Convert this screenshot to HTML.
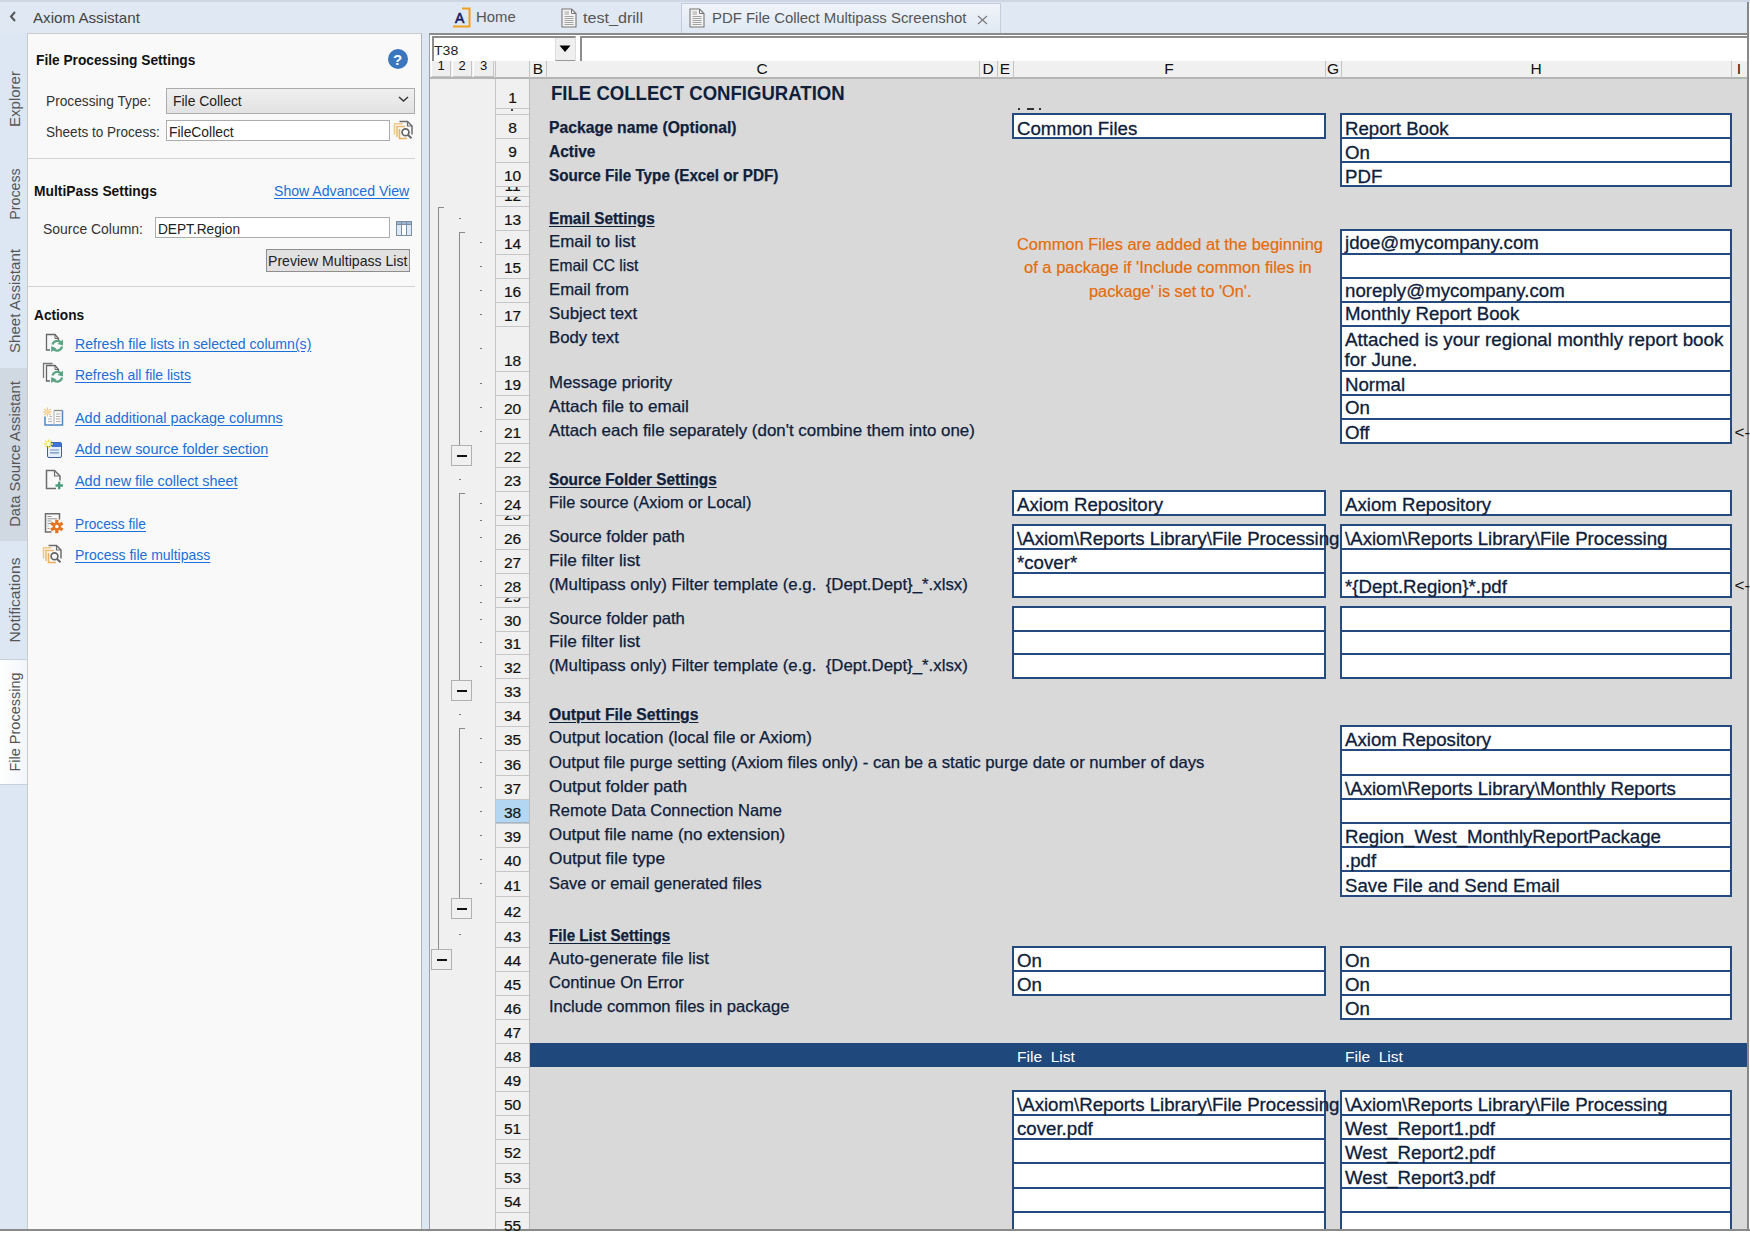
<!DOCTYPE html>
<html><head><meta charset="utf-8">
<style>
*{margin:0;padding:0;box-sizing:border-box}
html,body{width:1750px;height:1233px;overflow:hidden;background:#dfe8f3;font-family:"Liberation Sans",sans-serif;position:relative}
.a{position:absolute}
.t{position:absolute;white-space:nowrap;transform-origin:0 0;line-height:1}
.v{position:absolute;white-space:nowrap;line-height:1}
</style></head><body>
<div class="a" style="left:0px;top:33px;width:27px;height:1197px;background:#dde7f3"></div>
<div class="a" style="left:0px;top:368px;width:27px;height:173px;background:#d0d8e1"></div>
<div class="a" style="left:0px;top:659px;width:27px;height:126px;background:linear-gradient(90deg,#ffffff,#f2f5fa);border-top:1px solid #c9d1db;border-bottom:1px solid #c9d1db"></div>
<svg class="a" style="left:8px;top:10px" width="10" height="14"><path d="M7 2 L3 6.5 L7 11" fill="none" stroke="#555" stroke-width="2"/></svg>
<div class="a" style="left:27px;top:33px;width:395px;height:1197px;background:#f9f9f9;border-left:1px solid #cbcbcb;border-top:1px solid #cbcbcb;border-right:1px solid #b4b4b4"></div>
<div class="a" style="left:388px;top:49px;width:20px;height:20px;border-radius:50%;background:#3a76bd"></div>
<div class="a" style="left:166px;top:88px;width:249px;height:26px;background:linear-gradient(#f0f0f0,#e2e2e2);border:1px solid #acacac"></div>
<svg class="a" style="left:398px;top:96px" width="11" height="7"><path d="M1 1 L5.5 5 L10 1" fill="none" stroke="#333" stroke-width="1.4"/></svg>
<div class="a" style="left:166px;top:120px;width:224px;height:21px;background:#fff;border:1px solid #acacac"></div>
<div class="a" style="left:28px;top:158px;width:387px;height:1px;background:#d2d2d2"></div>
<div class="a" style="left:155px;top:217px;width:235px;height:21px;background:#fff;border:1px solid #acacac"></div>
<svg class="a" style="left:396px;top:221px" width="16" height="15">
<rect x="0.5" y="0.5" width="15" height="14" fill="#dfe9f5" stroke="#7a8ea6"/>
<rect x="0.5" y="0.5" width="15" height="3" fill="#9fb4cc" stroke="#7a8ea6"/>
<path d="M5.5 1 V14 M10.5 1 V14" stroke="#7a8ea6"/>
<rect x="6" y="4" width="4" height="10" fill="#fff"/>
</svg>
<div class="a" style="left:266px;top:249px;width:144px;height:23px;background:#e1e1e1;border:1px solid #8e8e8e"></div>
<div class="a" style="left:28px;top:286px;width:387px;height:1px;background:#d2d2d2"></div>
<svg class="a" style="left:42px;top:331px" width="24" height="24"><path d="M8 19 H4.5 V3.5 H13 L16.5 7.5 V10" fill="none" stroke="#666" stroke-width="1.3"/><path d="M13 3.5 V7.5 H16.5" fill="none" stroke="#666" stroke-width="1"/><path d="M10.5 13.5 A5 5 0 0 1 19 11.5" fill="none" stroke="#5aa383" stroke-width="2.3"/><path d="M21 8.5 L21 14.5 L15.5 13 Z" fill="#5aa383"/><path d="M20 15.5 A5 5 0 0 1 11.5 18" fill="none" stroke="#5aa383" stroke-width="2.3"/><path d="M9 21 L9.3 15 L14.5 17.5 Z" fill="#5aa383"/></svg>
<svg class="a" style="left:42px;top:362px" width="24" height="24"><path d="M1.5 16 V1.5 H10.5" fill="none" stroke="#777" stroke-width="1.3"/><path d="M8 19 H4.5 V3.5 H13 L16.5 7.5 V10" fill="none" stroke="#666" stroke-width="1.3"/><path d="M13 3.5 V7.5 H16.5" fill="none" stroke="#666" stroke-width="1"/><path d="M10.5 13.5 A5 5 0 0 1 19 11.5" fill="none" stroke="#5aa383" stroke-width="2.3"/><path d="M21 8.5 L21 14.5 L15.5 13 Z" fill="#5aa383"/><path d="M20 15.5 A5 5 0 0 1 11.5 18" fill="none" stroke="#5aa383" stroke-width="2.3"/><path d="M9 21 L9.3 15 L14.5 17.5 Z" fill="#5aa383"/></svg>
<svg class="a" style="left:40px;top:405px" width="30" height="25" viewBox="40 405 30 25">
<g stroke="#f0c27a" stroke-width="1.1"><path d="M47.5 407.5 V416.5 M43 412 H52 M44.3 408.8 L50.7 415.2 M50.7 408.8 L44.3 415.2"/></g>
<circle cx="47.5" cy="412" r="2.2" fill="#f6d9a4"/>
<path d="M45 416.5 V425 H62.5 V410.5" fill="none" stroke="#4f86c6" stroke-width="1.5"/>
<path d="M54 410.5 H62.5" stroke="#888" stroke-width="1.3"/>
<path d="M54 410.5 V425" stroke="#bbb" stroke-width="1.2"/>
<path d="M56 414 H60.5 M56 416.5 H60.5 M56 419 H60.5 M56 421.5 H60.5 M48 419 H52 M48 421.5 H52 M49.5 416.5 H52" stroke="#aaa" stroke-width="0.9"/>
</svg>
<svg class="a" style="left:40px;top:436px" width="30" height="26" viewBox="40 436 30 26">
<rect x="47.5" y="442.5" width="14" height="15" rx="1.5" fill="#e6eefb" stroke="#3d5f96" stroke-width="1"/>
<rect x="47.5" y="442.5" width="14" height="4.5" rx="1" fill="#3f73d8"/>
<path d="M50 450 H59 M50 452.8 H59" stroke="#6f8fc2" stroke-width="1.2"/>
<g stroke="#f5e05a" stroke-width="1.3"><path d="M48.5 439.5 V448.5 M44 444 H53 M45.3 440.8 L51.7 447.2 M51.7 440.8 L45.3 447.2"/></g>
<circle cx="48.5" cy="444" r="2" fill="#fffbe0"/>
</svg>
<svg class="a" style="left:40px;top:468px" width="30" height="25" viewBox="40 468 30 25">
<path d="M56 488.5 H46.5 V470.5 H54.5 L60 476 V480.5" fill="none" stroke="#6d6d6d" stroke-width="1.5"/>
<path d="M54.5 470.5 V476 H60" fill="none" stroke="#6d6d6d" stroke-width="1.2"/>
<path d="M59.2 481.8 V489.2 M55.5 485.5 H62.9" stroke="#4f9a7c" stroke-width="2.4"/>
</svg>
<svg class="a" style="left:40px;top:511px" width="30" height="25" viewBox="40 511 30 25">
<path d="M51.5 532 H45.5 V513.8 H59.5 V519.5" fill="none" stroke="#6d6d6d" stroke-width="1.5"/>
<path d="M47.5 516.5 H51.5 M47.5 518.8 H57 M47.5 521 H51.5 M47.5 523.5 H51 M47.5 526 H48.5 M47.5 528.5 H49.5" stroke="#8a8a8a" stroke-width="0.9"/>
<g fill="#e8731f"><circle cx="56.8" cy="526.5" r="4"/>
<path d="M55.2 519.8 H58.4 V533.2 H55.2 Z" transform="rotate(0 56.8 526.5)"/>
<path d="M55.2 519.8 H58.4 V533.2 H55.2 Z" transform="rotate(60 56.8 526.5)"/>
<path d="M55.2 519.8 H58.4 V533.2 H55.2 Z" transform="rotate(120 56.8 526.5)"/></g>
<circle cx="56.8" cy="526.5" r="1.8" fill="#fff"/>
</svg>
<svg class="a" style="left:40px;top:542px" width="30" height="24" viewBox="40 542 30 24"><g transform="translate(0 0)">
<path d="M43.5 558.5 V547.8 H51.5" fill="none" stroke="#f0c888" stroke-width="1.5"/>
<path d="M46 561 V550.5 H54" fill="none" stroke="#ecb870" stroke-width="1.5"/>
<path d="M48.5 545.5 H56.5 L61 550 V558.5" fill="none" stroke="#6d6d6d" stroke-width="1.5"/>
<path d="M56.5 545.5 V550 H61" fill="none" stroke="#6d6d6d" stroke-width="1.2"/>
<path d="M48.5 553 V562.5 H56" fill="none" stroke="#e9b060" stroke-width="1.6"/>
<circle cx="54.5" cy="556.3" r="3.4" fill="#fff" stroke="#666" stroke-width="1.7"/>
<path d="M57 559 L60.5 562.3" stroke="#666" stroke-width="2"/></g></svg>
<svg class="a" style="left:391px;top:118px" width="30" height="24" viewBox="391 118 30 24"><g transform="translate(351 -424)">
<path d="M43.5 558.5 V547.8 H51.5" fill="none" stroke="#f0c888" stroke-width="1.5"/>
<path d="M46 561 V550.5 H54" fill="none" stroke="#ecb870" stroke-width="1.5"/>
<path d="M48.5 545.5 H56.5 L61 550 V558.5" fill="none" stroke="#6d6d6d" stroke-width="1.5"/>
<path d="M56.5 545.5 V550 H61" fill="none" stroke="#6d6d6d" stroke-width="1.2"/>
<path d="M48.5 553 V562.5 H56" fill="none" stroke="#e9b060" stroke-width="1.6"/>
<circle cx="54.5" cy="556.3" r="3.4" fill="#fff" stroke="#666" stroke-width="1.7"/>
<path d="M57 559 L60.5 562.3" stroke="#666" stroke-width="2"/></g></svg>
<div class="a" style="left:422px;top:33px;width:7px;height:1197px;background:#dde7f3"></div>
<svg class="a" style="left:452px;top:7px" width="20" height="21">
<path d="M10 1.5 H17.5 V19.5 H1" fill="none" stroke="#f0a01e" stroke-width="2"/>
<text x="3" y="16" font-family="Liberation Sans" font-size="14" fill="#1a1a66" stroke="#1a1a66" stroke-width="0.6">A</text>
</svg>
<svg class="a" style="left:561px;top:8px" width="16" height="20">
<path d="M1 1 H10.5 L15 5.5 V19 H1 Z" fill="#f4f4f4" stroke="#777" stroke-width="1.1"/>
<path d="M10.5 1 V5.5 H15" fill="none" stroke="#777" stroke-width="1"/>
<path d="M3.5 4 H8 M3.5 6 H8 M3.5 8.5 H12.5 M3.5 10.5 H12.5 M3.5 12.5 H12.5 M3.5 14.5 H12.5 M3.5 16.5 H12.5" stroke="#999" stroke-width="0.9"/>
</svg>
<div class="a" style="left:681px;top:3px;width:320px;height:30px;background:linear-gradient(#f0f4fa,#dfe8f3);border:1px solid #c3ccd8;border-bottom:none"></div>
<svg class="a" style="left:689px;top:8px" width="16" height="20">
<path d="M1 1 H10.5 L15 5.5 V19 H1 Z" fill="#f4f4f4" stroke="#777" stroke-width="1.1"/>
<path d="M10.5 1 V5.5 H15" fill="none" stroke="#777" stroke-width="1"/>
<path d="M3.5 4 H8 M3.5 6 H8 M3.5 8.5 H12.5 M3.5 10.5 H12.5 M3.5 12.5 H12.5 M3.5 14.5 H12.5 M3.5 16.5 H12.5" stroke="#999" stroke-width="0.9"/>
</svg>
<svg class="a" style="left:977px;top:15px" width="11" height="10"><path d="M1 1 L10 9 M10 1 L1 9" stroke="#777" stroke-width="1.1"/></svg>
<div class="a" style="left:429px;top:33px;width:1320px;height:1197px;background:#f0f0f0;border-top:2px solid #8b8b8b;border-left:1px solid #a0a0a0"></div>
<div class="a" style="left:1747px;top:0px;width:3px;height:1230px;background:#888;border-right:1px solid #fff"></div>
<div class="a" style="left:430px;top:35px;width:1317px;height:26px;background:#fff"></div>
<div class="a" style="left:432px;top:36px;width:144px;height:25px;background:#fff;border-top:2px solid #8c8c8c;border-left:2px solid #8c8c8c;border-right:1px solid #dcdcdc"></div>
<div class="a" style="left:555px;top:38px;width:20px;height:23px;background:#efefef;border-left:1px solid #ddd;border-bottom:1px solid #999"></div>
<svg class="a" style="left:559px;top:45px" width="12" height="8"><path d="M0.5 0.5 H11.5 L6 7 Z" fill="#000"/></svg>
<div class="a" style="left:580px;top:36px;width:1167px;height:25px;background:#fff;border-top:2px solid #8c8c8c;border-left:2px solid #8c8c8c"></div>
<div class="a" style="left:430px;top:61px;width:1317px;height:18px;background:#f0f0f0;border-bottom:2px solid #b5b5b5"></div>
<div class="a" style="left:431px;top:61px;width:20px;height:16px;background:#efefef;border-right:1px solid #c4c4c4;border-bottom:1px solid #c4c4c4;border-left:1px solid #fff"></div>
<div class="a" style="left:452px;top:61px;width:20px;height:16px;background:#efefef;border-right:1px solid #c4c4c4;border-bottom:1px solid #c4c4c4;border-left:1px solid #fff"></div>
<div class="a" style="left:473px;top:61px;width:21px;height:16px;background:#efefef;border-right:1px solid #c4c4c4;border-bottom:1px solid #c4c4c4;border-left:1px solid #fff"></div>
<div class="a" style="left:495px;top:61px;width:1px;height:17px;background:#c4c4c4"></div>
<div class="a" style="left:529px;top:61px;width:1px;height:17px;background:#c4c4c4"></div>
<div class="a" style="left:546px;top:61px;width:1px;height:17px;background:#c4c4c4"></div>
<div class="a" style="left:979px;top:61px;width:1px;height:17px;background:#c4c4c4"></div>
<div class="a" style="left:997px;top:61px;width:1px;height:17px;background:#c4c4c4"></div>
<div class="a" style="left:1013px;top:61px;width:1px;height:17px;background:#c4c4c4"></div>
<div class="a" style="left:1325px;top:61px;width:1px;height:17px;background:#c4c4c4"></div>
<div class="a" style="left:1341px;top:61px;width:1px;height:17px;background:#c4c4c4"></div>
<div class="a" style="left:1731px;top:61px;width:1px;height:17px;background:#c4c4c4"></div>
<div class="a" style="left:430px;top:79px;width:65px;height:1151px;background:#f0f0f0"></div>
<div class="a" style="left:495px;top:79px;width:35px;height:1151px;background:#f0f0f0;border-left:1px solid #c4c4c4;border-right:1px solid #bdbdbd"></div>
<div class="a" style="left:530px;top:79px;width:1217px;height:1151px;background:#d9d9d9"></div>
<div class="a" style="left:496px;top:799px;width:33px;height:24px;background:#b3d7f2;border-top:1px solid #9fb7cc;border-bottom:1px solid #9fb7cc"></div>
<div class="a" style="left:496px;top:108px;width:33px;height:1px;background:#c6c6c6"></div>
<div class="a" style="left:496px;top:114px;width:33px;height:1px;background:#c6c6c6"></div>
<div class="a" style="left:496px;top:138px;width:33px;height:1px;background:#c6c6c6"></div>
<div class="a" style="left:496px;top:162px;width:33px;height:1px;background:#c6c6c6"></div>
<div class="a" style="left:496px;top:186px;width:33px;height:1px;background:#c6c6c6"></div>
<div class="a" style="left:496px;top:196px;width:33px;height:1px;background:#c6c6c6"></div>
<div class="a" style="left:496px;top:206px;width:33px;height:1px;background:#c6c6c6"></div>
<div class="a" style="left:496px;top:230px;width:33px;height:1px;background:#c6c6c6"></div>
<div class="a" style="left:496px;top:254px;width:33px;height:1px;background:#c6c6c6"></div>
<div class="a" style="left:496px;top:278px;width:33px;height:1px;background:#c6c6c6"></div>
<div class="a" style="left:496px;top:302px;width:33px;height:1px;background:#c6c6c6"></div>
<div class="a" style="left:496px;top:326px;width:33px;height:1px;background:#c6c6c6"></div>
<div class="a" style="left:496px;top:371px;width:33px;height:1px;background:#c6c6c6"></div>
<div class="a" style="left:496px;top:395px;width:33px;height:1px;background:#c6c6c6"></div>
<div class="a" style="left:496px;top:419px;width:33px;height:1px;background:#c6c6c6"></div>
<div class="a" style="left:496px;top:443px;width:33px;height:1px;background:#c6c6c6"></div>
<div class="a" style="left:496px;top:467px;width:33px;height:1px;background:#c6c6c6"></div>
<div class="a" style="left:496px;top:491px;width:33px;height:1px;background:#c6c6c6"></div>
<div class="a" style="left:496px;top:515px;width:33px;height:1px;background:#c6c6c6"></div>
<div class="a" style="left:496px;top:525px;width:33px;height:1px;background:#c6c6c6"></div>
<div class="a" style="left:496px;top:549px;width:33px;height:1px;background:#c6c6c6"></div>
<div class="a" style="left:496px;top:573px;width:33px;height:1px;background:#c6c6c6"></div>
<div class="a" style="left:496px;top:597px;width:33px;height:1px;background:#c6c6c6"></div>
<div class="a" style="left:496px;top:607px;width:33px;height:1px;background:#c6c6c6"></div>
<div class="a" style="left:496px;top:631px;width:33px;height:1px;background:#c6c6c6"></div>
<div class="a" style="left:496px;top:654px;width:33px;height:1px;background:#c6c6c6"></div>
<div class="a" style="left:496px;top:678px;width:33px;height:1px;background:#c6c6c6"></div>
<div class="a" style="left:496px;top:702px;width:33px;height:1px;background:#c6c6c6"></div>
<div class="a" style="left:496px;top:726px;width:33px;height:1px;background:#c6c6c6"></div>
<div class="a" style="left:496px;top:750px;width:33px;height:1px;background:#c6c6c6"></div>
<div class="a" style="left:496px;top:775px;width:33px;height:1px;background:#c6c6c6"></div>
<div class="a" style="left:496px;top:799px;width:33px;height:1px;background:#c6c6c6"></div>
<div class="a" style="left:496px;top:823px;width:33px;height:1px;background:#c6c6c6"></div>
<div class="a" style="left:496px;top:847px;width:33px;height:1px;background:#c6c6c6"></div>
<div class="a" style="left:496px;top:871px;width:33px;height:1px;background:#c6c6c6"></div>
<div class="a" style="left:496px;top:896px;width:33px;height:1px;background:#c6c6c6"></div>
<div class="a" style="left:496px;top:922px;width:33px;height:1px;background:#c6c6c6"></div>
<div class="a" style="left:496px;top:947px;width:33px;height:1px;background:#c6c6c6"></div>
<div class="a" style="left:496px;top:971px;width:33px;height:1px;background:#c6c6c6"></div>
<div class="a" style="left:496px;top:995px;width:33px;height:1px;background:#c6c6c6"></div>
<div class="a" style="left:496px;top:1019px;width:33px;height:1px;background:#c6c6c6"></div>
<div class="a" style="left:496px;top:1043px;width:33px;height:1px;background:#c6c6c6"></div>
<div class="a" style="left:496px;top:1067px;width:33px;height:1px;background:#c6c6c6"></div>
<div class="a" style="left:496px;top:1091px;width:33px;height:1px;background:#c6c6c6"></div>
<div class="a" style="left:496px;top:1115px;width:33px;height:1px;background:#c6c6c6"></div>
<div class="a" style="left:496px;top:1139px;width:33px;height:1px;background:#c6c6c6"></div>
<div class="a" style="left:496px;top:1163px;width:33px;height:1px;background:#c6c6c6"></div>
<div class="a" style="left:496px;top:1188px;width:33px;height:1px;background:#c6c6c6"></div>
<div class="a" style="left:496px;top:1212px;width:33px;height:1px;background:#c6c6c6"></div>
<div class="a" style="left:496px;top:1236px;width:33px;height:1px;background:#c6c6c6"></div>
<div class="a" style="left:438px;top:207px;width:1px;height:742px;background:#8a8a8a"></div>
<div class="a" style="left:438px;top:207px;width:6px;height:1px;background:#8a8a8a"></div>
<div class="a" style="left:431px;top:949px;width:21px;height:21px;background:#f0f0f0;border:1px solid #b0b0b0"></div>
<div class="a" style="left:437px;top:959px;width:10px;height:2px;background:#111"></div>
<div class="a" style="left:459px;top:232px;width:1px;height:213px;background:#8a8a8a"></div>
<div class="a" style="left:459px;top:232px;width:6px;height:1px;background:#8a8a8a"></div>
<div class="a" style="left:451px;top:445px;width:21px;height:21px;background:#f0f0f0;border:1px solid #b0b0b0"></div>
<div class="a" style="left:457px;top:455px;width:10px;height:2px;background:#111"></div>
<div class="a" style="left:480px;top:242px;width:2px;height:1px;background:#777"></div>
<div class="a" style="left:480px;top:266px;width:2px;height:1px;background:#777"></div>
<div class="a" style="left:480px;top:290px;width:2px;height:1px;background:#777"></div>
<div class="a" style="left:480px;top:314px;width:2px;height:1px;background:#777"></div>
<div class="a" style="left:480px;top:348px;width:2px;height:1px;background:#777"></div>
<div class="a" style="left:480px;top:383px;width:2px;height:1px;background:#777"></div>
<div class="a" style="left:480px;top:407px;width:2px;height:1px;background:#777"></div>
<div class="a" style="left:480px;top:431px;width:2px;height:1px;background:#777"></div>
<div class="a" style="left:459px;top:493px;width:1px;height:187px;background:#8a8a8a"></div>
<div class="a" style="left:459px;top:493px;width:6px;height:1px;background:#8a8a8a"></div>
<div class="a" style="left:451px;top:680px;width:21px;height:21px;background:#f0f0f0;border:1px solid #b0b0b0"></div>
<div class="a" style="left:457px;top:690px;width:10px;height:2px;background:#111"></div>
<div class="a" style="left:480px;top:503px;width:2px;height:1px;background:#777"></div>
<div class="a" style="left:480px;top:520px;width:2px;height:1px;background:#777"></div>
<div class="a" style="left:480px;top:537px;width:2px;height:1px;background:#777"></div>
<div class="a" style="left:480px;top:561px;width:2px;height:1px;background:#777"></div>
<div class="a" style="left:480px;top:585px;width:2px;height:1px;background:#777"></div>
<div class="a" style="left:480px;top:602px;width:2px;height:1px;background:#777"></div>
<div class="a" style="left:480px;top:619px;width:2px;height:1px;background:#777"></div>
<div class="a" style="left:480px;top:642px;width:2px;height:1px;background:#777"></div>
<div class="a" style="left:480px;top:666px;width:2px;height:1px;background:#777"></div>
<div class="a" style="left:459px;top:728px;width:1px;height:170px;background:#8a8a8a"></div>
<div class="a" style="left:459px;top:728px;width:6px;height:1px;background:#8a8a8a"></div>
<div class="a" style="left:451px;top:898px;width:21px;height:21px;background:#f0f0f0;border:1px solid #b0b0b0"></div>
<div class="a" style="left:457px;top:908px;width:10px;height:2px;background:#111"></div>
<div class="a" style="left:480px;top:738px;width:2px;height:1px;background:#777"></div>
<div class="a" style="left:480px;top:762px;width:2px;height:1px;background:#777"></div>
<div class="a" style="left:480px;top:787px;width:2px;height:1px;background:#777"></div>
<div class="a" style="left:480px;top:811px;width:2px;height:1px;background:#777"></div>
<div class="a" style="left:480px;top:835px;width:2px;height:1px;background:#777"></div>
<div class="a" style="left:480px;top:859px;width:2px;height:1px;background:#777"></div>
<div class="a" style="left:480px;top:883px;width:2px;height:1px;background:#777"></div>
<div class="a" style="left:459px;top:218px;width:2px;height:1px;background:#777"></div>
<div class="a" style="left:459px;top:479px;width:2px;height:1px;background:#777"></div>
<div class="a" style="left:459px;top:714px;width:2px;height:1px;background:#777"></div>
<div class="a" style="left:459px;top:934px;width:2px;height:1px;background:#777"></div>
<div class="a" style="left:480px;top:520px;width:2px;height:1px;background:#777"></div>
<div class="a" style="left:480px;top:602px;width:2px;height:1px;background:#777"></div>
<div class="a" style="left:1012px;top:113px;width:314px;height:26px;background:#fff;border:2px solid #244a80"></div>
<div class="a" style="left:1340px;top:113px;width:392px;height:74px;background:#fff;border:2px solid #244a80"></div>
<div class="a" style="left:1340px;top:137px;width:392px;height:2px;background:#244a80"></div>
<div class="a" style="left:1340px;top:161px;width:392px;height:2px;background:#244a80"></div>
<div class="a" style="left:1340px;top:229px;width:392px;height:215px;background:#fff;border:2px solid #244a80"></div>
<div class="a" style="left:1340px;top:253px;width:392px;height:2px;background:#244a80"></div>
<div class="a" style="left:1340px;top:277px;width:392px;height:2px;background:#244a80"></div>
<div class="a" style="left:1340px;top:301px;width:392px;height:2px;background:#244a80"></div>
<div class="a" style="left:1340px;top:325px;width:392px;height:2px;background:#244a80"></div>
<div class="a" style="left:1340px;top:370px;width:392px;height:2px;background:#244a80"></div>
<div class="a" style="left:1340px;top:394px;width:392px;height:2px;background:#244a80"></div>
<div class="a" style="left:1340px;top:418px;width:392px;height:2px;background:#244a80"></div>
<div class="a" style="left:1012px;top:490px;width:314px;height:26px;background:#fff;border:2px solid #244a80"></div>
<div class="a" style="left:1340px;top:490px;width:392px;height:26px;background:#fff;border:2px solid #244a80"></div>
<div class="a" style="left:1012px;top:524px;width:314px;height:74px;background:#fff;border:2px solid #244a80"></div>
<div class="a" style="left:1012px;top:548px;width:314px;height:2px;background:#244a80"></div>
<div class="a" style="left:1012px;top:572px;width:314px;height:2px;background:#244a80"></div>
<div class="a" style="left:1340px;top:524px;width:392px;height:74px;background:#fff;border:2px solid #244a80"></div>
<div class="a" style="left:1340px;top:548px;width:392px;height:2px;background:#244a80"></div>
<div class="a" style="left:1340px;top:572px;width:392px;height:2px;background:#244a80"></div>
<div class="a" style="left:1012px;top:606px;width:314px;height:73px;background:#fff;border:2px solid #244a80"></div>
<div class="a" style="left:1012px;top:630px;width:314px;height:2px;background:#244a80"></div>
<div class="a" style="left:1012px;top:653px;width:314px;height:2px;background:#244a80"></div>
<div class="a" style="left:1340px;top:606px;width:392px;height:73px;background:#fff;border:2px solid #244a80"></div>
<div class="a" style="left:1340px;top:630px;width:392px;height:2px;background:#244a80"></div>
<div class="a" style="left:1340px;top:653px;width:392px;height:2px;background:#244a80"></div>
<div class="a" style="left:1340px;top:725px;width:392px;height:172px;background:#fff;border:2px solid #244a80"></div>
<div class="a" style="left:1340px;top:749px;width:392px;height:2px;background:#244a80"></div>
<div class="a" style="left:1340px;top:774px;width:392px;height:2px;background:#244a80"></div>
<div class="a" style="left:1340px;top:798px;width:392px;height:2px;background:#244a80"></div>
<div class="a" style="left:1340px;top:822px;width:392px;height:2px;background:#244a80"></div>
<div class="a" style="left:1340px;top:846px;width:392px;height:2px;background:#244a80"></div>
<div class="a" style="left:1340px;top:870px;width:392px;height:2px;background:#244a80"></div>
<div class="a" style="left:1012px;top:946px;width:314px;height:50px;background:#fff;border:2px solid #244a80"></div>
<div class="a" style="left:1012px;top:970px;width:314px;height:2px;background:#244a80"></div>
<div class="a" style="left:1340px;top:946px;width:392px;height:74px;background:#fff;border:2px solid #244a80"></div>
<div class="a" style="left:1340px;top:970px;width:392px;height:2px;background:#244a80"></div>
<div class="a" style="left:1340px;top:994px;width:392px;height:2px;background:#244a80"></div>
<div class="a" style="left:1012px;top:1090px;width:314px;height:147px;background:#fff;border:2px solid #244a80"></div>
<div class="a" style="left:1012px;top:1114px;width:314px;height:2px;background:#244a80"></div>
<div class="a" style="left:1012px;top:1138px;width:314px;height:2px;background:#244a80"></div>
<div class="a" style="left:1012px;top:1162px;width:314px;height:2px;background:#244a80"></div>
<div class="a" style="left:1012px;top:1187px;width:314px;height:2px;background:#244a80"></div>
<div class="a" style="left:1012px;top:1211px;width:314px;height:2px;background:#244a80"></div>
<div class="a" style="left:1340px;top:1090px;width:392px;height:147px;background:#fff;border:2px solid #244a80"></div>
<div class="a" style="left:1340px;top:1114px;width:392px;height:2px;background:#244a80"></div>
<div class="a" style="left:1340px;top:1138px;width:392px;height:2px;background:#244a80"></div>
<div class="a" style="left:1340px;top:1162px;width:392px;height:2px;background:#244a80"></div>
<div class="a" style="left:1340px;top:1187px;width:392px;height:2px;background:#244a80"></div>
<div class="a" style="left:1340px;top:1211px;width:392px;height:2px;background:#244a80"></div>
<div class="a" style="left:1018px;top:108px;width:2px;height:2px;background:#333"></div>
<div class="a" style="left:1027px;top:108px;width:7px;height:2px;background:#333"></div>
<div class="a" style="left:1039px;top:108px;width:2px;height:2px;background:#333"></div>
<div class="a" style="left:511px;top:109px;width:2px;height:2px;background:#444"></div>
<div class="a" style="left:530px;top:1043px;width:1217px;height:24px;background:#1f497d"></div>
<div class="a" style="left:0px;top:0px;width:1750px;height:2px;background:#cdd6e2"></div>
<div class="a" style="left:0px;top:1229px;width:1750px;height:4px;background:#fff;border-top:2px solid #8a8a8a"></div>
<div id="t0" class="v" style="left:14.5px;top:99.0px;font-size:14.5px;color:#555;transform:translate(-50%,-50%) rotate(-90deg) scaleX(1.0370)">Explorer</div>
<div id="t1" class="v" style="left:14.5px;top:193.5px;font-size:14.5px;color:#555;transform:translate(-50%,-50%) rotate(-90deg) scaleX(0.9808)">Process</div>
<div id="t2" class="v" style="left:14.5px;top:301.0px;font-size:14.5px;color:#555;transform:translate(-50%,-50%) rotate(-90deg) scaleX(1.0400)">Sheet Assistant</div>
<div id="t3" class="v" style="left:14.5px;top:454.0px;font-size:14.5px;color:#555;transform:translate(-50%,-50%) rotate(-90deg) scaleX(1.0210)">Data Source Assistant</div>
<div id="t4" class="v" style="left:14.5px;top:599.5px;font-size:14.5px;color:#555;transform:translate(-50%,-50%) rotate(-90deg) scaleX(1.0759)">Notifications</div>
<div id="t5" class="v" style="left:14.5px;top:721.5px;font-size:14.5px;color:#555;transform:translate(-50%,-50%) rotate(-90deg) scaleX(1.0000)">File Processing</div>
<div id="t6" class="t" style="top:10.30px;font-size:15px;color:#444;left:32.50px;transform:scaleX(1.0094);">Axiom Assistant</div>
<div id="t7" class="t" style="top:52.72px;font-size:14.5px;color:#111;font-weight:bold;left:35.50px;transform:scaleX(0.9464);">File Processing Settings</div>
<div id="t8" class="t" style="top:52.30px;font-size:15px;color:#fff;font-weight:bold;left:393.00px;">?</div>
<div id="t9" class="t" style="top:93.72px;font-size:14.5px;color:#333;left:45.50px;transform:scaleX(0.9459);">Processing Type:</div>
<div id="t10" class="t" style="top:93.72px;font-size:14.5px;color:#222;left:172.50px;transform:scaleX(0.9583);">File Collect</div>
<div id="t11" class="t" style="top:124.72px;font-size:14.5px;color:#333;left:45.50px;transform:scaleX(0.9344);">Sheets to Process:</div>
<div id="t12" class="t" style="top:124.72px;font-size:14.5px;color:#222;left:168.50px;transform:scaleX(0.9559);">FileCollect</div>
<div id="t13" class="t" style="top:183.72px;font-size:14.5px;color:#111;font-weight:bold;left:33.50px;transform:scaleX(0.9535);">MultiPass Settings</div>
<div id="t14" class="t" style="top:183.72px;font-size:14.5px;color:#1a6fd8;text-decoration:underline;text-underline-offset:1.5px;left:273.50px;transform:scaleX(0.9712);">Show Advanced View</div>
<div id="t15" class="t" style="top:221.72px;font-size:14.5px;color:#333;left:42.50px;transform:scaleX(0.9615);">Source Column:</div>
<div id="t16" class="t" style="top:221.72px;font-size:14.5px;color:#222;left:157.50px;transform:scaleX(0.9425);">DEPT.Region</div>
<div id="t17" class="t" style="top:253.72px;font-size:14.5px;color:#222;left:267.50px;transform:scaleX(0.9720);">Preview Multipass List</div>
<div id="t18" class="t" style="top:307.72px;font-size:14.5px;color:#111;font-weight:bold;left:33.50px;transform:scaleX(0.9434);">Actions</div>
<div id="t19" class="t" style="top:337.22px;font-size:14.5px;color:#1a6fd8;text-decoration:underline;text-underline-offset:1.5px;left:74.50px;transform:scaleX(0.9712);">Refresh file lists in selected column(s)</div>
<div id="t20" class="t" style="top:368.22px;font-size:14.5px;color:#1a6fd8;text-decoration:underline;text-underline-offset:1.5px;left:74.50px;transform:scaleX(0.9587);">Refresh all file lists</div>
<div id="t21" class="t" style="top:411.22px;font-size:14.5px;color:#1a6fd8;text-decoration:underline;text-underline-offset:1.5px;left:74.50px;transform:scaleX(0.9952);">Add additional package columns</div>
<div id="t22" class="t" style="top:442.22px;font-size:14.5px;color:#1a6fd8;text-decoration:underline;text-underline-offset:1.5px;left:74.50px;transform:scaleX(0.9948);">Add new source folder section</div>
<div id="t23" class="t" style="top:474.22px;font-size:14.5px;color:#1a6fd8;text-decoration:underline;text-underline-offset:1.5px;left:74.50px;transform:scaleX(0.9939);">Add new file collect sheet</div>
<div id="t24" class="t" style="top:517.22px;font-size:14.5px;color:#1a6fd8;text-decoration:underline;text-underline-offset:1.5px;left:74.50px;transform:scaleX(0.9467);">Process file</div>
<div id="t25" class="t" style="top:548.22px;font-size:14.5px;color:#1a6fd8;text-decoration:underline;text-underline-offset:1.5px;left:74.50px;transform:scaleX(0.9643);">Process file multipass</div>
<div id="t26" class="t" style="top:10.32px;font-size:14.5px;color:#555;left:475.50px;transform:scaleX(1.0256);">Home</div>
<div id="t27" class="t" style="top:10.72px;font-size:14.5px;color:#555;left:582.50px;transform:scaleX(1.1111);">test_drill</div>
<div id="t28" class="t" style="top:10.72px;font-size:14.5px;color:#555;left:711.50px;transform:scaleX(1.0283);">PDF File Collect Multipass Screenshot</div>
<div id="t29" class="t" style="top:43.57px;font-size:13.5px;color:#222;left:433.50px;transform:scaleX(1.0435);">T38</div>
<div id="t30" class="t" style="top:59.49px;font-size:13px;color:#111;left:441.0px;transform:translateX(-50%);">1</div>
<div id="t31" class="t" style="top:59.49px;font-size:13px;color:#111;left:462.0px;transform:translateX(-50%);">2</div>
<div id="t32" class="t" style="top:59.49px;font-size:13px;color:#111;left:483.5px;transform:translateX(-50%);">3</div>
<div id="t33" class="t" style="top:60.88px;font-size:15.5px;color:#111;left:538px;transform:translateX(-50%);">B</div>
<div id="t34" class="t" style="top:60.88px;font-size:15.5px;color:#111;left:762px;transform:translateX(-50%);">C</div>
<div id="t35" class="t" style="top:60.88px;font-size:15.5px;color:#111;left:988px;transform:translateX(-50%);">D</div>
<div id="t36" class="t" style="top:60.88px;font-size:15.5px;color:#111;left:1005px;transform:translateX(-50%);">E</div>
<div id="t37" class="t" style="top:60.88px;font-size:15.5px;color:#111;left:1169px;transform:translateX(-50%);">F</div>
<div id="t38" class="t" style="top:60.88px;font-size:15.5px;color:#111;left:1333px;transform:translateX(-50%);">G</div>
<div id="t39" class="t" style="top:60.88px;font-size:15.5px;color:#111;left:1536px;transform:translateX(-50%);">H</div>
<div id="t40" class="t" style="top:60.88px;font-size:15.5px;color:#111;left:1739px;transform:translateX(-50%);">I</div>
<div id="t41" class="t" style="top:89.88px;font-size:15.5px;color:#111;left:512.5px;transform:translateX(-50%);clip-path:inset(-10.9px -20px 0.0px -20px);-webkit-text-stroke:0.2px #111;">1</div>
<div id="t42" class="t" style="top:119.88px;font-size:15.5px;color:#111;left:512.5px;transform:translateX(-50%);clip-path:inset(-4.9px -20px 0.0px -20px);-webkit-text-stroke:0.2px #111;">8</div>
<div id="t43" class="t" style="top:143.88px;font-size:15.5px;color:#111;left:512.5px;transform:translateX(-50%);clip-path:inset(-4.9px -20px 0.0px -20px);-webkit-text-stroke:0.2px #111;">9</div>
<div id="t44" class="t" style="top:167.88px;font-size:15.5px;color:#111;left:512.5px;transform:translateX(-50%);clip-path:inset(-4.9px -20px 0.0px -20px);-webkit-text-stroke:0.2px #111;">10</div>
<div id="t45" class="t" style="top:177.88px;font-size:15.5px;color:#111;left:512.5px;transform:translateX(-50%);clip-path:inset(9.1px -20px 0.0px -20px);-webkit-text-stroke:0.2px #111;">11</div>
<div id="t46" class="t" style="top:187.88px;font-size:15.5px;color:#111;left:512.5px;transform:translateX(-50%);clip-path:inset(9.1px -20px 0.0px -20px);-webkit-text-stroke:0.2px #111;">12</div>
<div id="t47" class="t" style="top:211.88px;font-size:15.5px;color:#111;left:512.5px;transform:translateX(-50%);clip-path:inset(-4.9px -20px 0.0px -20px);-webkit-text-stroke:0.2px #111;">13</div>
<div id="t48" class="t" style="top:235.88px;font-size:15.5px;color:#111;left:512.5px;transform:translateX(-50%);clip-path:inset(-4.9px -20px 0.0px -20px);-webkit-text-stroke:0.2px #111;">14</div>
<div id="t49" class="t" style="top:259.88px;font-size:15.5px;color:#111;left:512.5px;transform:translateX(-50%);clip-path:inset(-4.9px -20px 0.0px -20px);-webkit-text-stroke:0.2px #111;">15</div>
<div id="t50" class="t" style="top:283.88px;font-size:15.5px;color:#111;left:512.5px;transform:translateX(-50%);clip-path:inset(-4.9px -20px 0.0px -20px);-webkit-text-stroke:0.2px #111;">16</div>
<div id="t51" class="t" style="top:307.88px;font-size:15.5px;color:#111;left:512.5px;transform:translateX(-50%);clip-path:inset(-4.9px -20px 0.0px -20px);-webkit-text-stroke:0.2px #111;">17</div>
<div id="t52" class="t" style="top:352.88px;font-size:15.5px;color:#111;left:512.5px;transform:translateX(-50%);clip-path:inset(-25.9px -20px 0.0px -20px);-webkit-text-stroke:0.2px #111;">18</div>
<div id="t53" class="t" style="top:376.88px;font-size:15.5px;color:#111;left:512.5px;transform:translateX(-50%);clip-path:inset(-4.9px -20px 0.0px -20px);-webkit-text-stroke:0.2px #111;">19</div>
<div id="t54" class="t" style="top:400.88px;font-size:15.5px;color:#111;left:512.5px;transform:translateX(-50%);clip-path:inset(-4.9px -20px 0.0px -20px);-webkit-text-stroke:0.2px #111;">20</div>
<div id="t55" class="t" style="top:424.88px;font-size:15.5px;color:#111;left:512.5px;transform:translateX(-50%);clip-path:inset(-4.9px -20px 0.0px -20px);-webkit-text-stroke:0.2px #111;">21</div>
<div id="t56" class="t" style="top:448.88px;font-size:15.5px;color:#111;left:512.5px;transform:translateX(-50%);clip-path:inset(-4.9px -20px 0.0px -20px);-webkit-text-stroke:0.2px #111;">22</div>
<div id="t57" class="t" style="top:472.88px;font-size:15.5px;color:#111;left:512.5px;transform:translateX(-50%);clip-path:inset(-4.9px -20px 0.0px -20px);-webkit-text-stroke:0.2px #111;">23</div>
<div id="t58" class="t" style="top:496.88px;font-size:15.5px;color:#111;left:512.5px;transform:translateX(-50%);clip-path:inset(-4.9px -20px 0.0px -20px);-webkit-text-stroke:0.2px #111;">24</div>
<div id="t59" class="t" style="top:506.88px;font-size:15.5px;color:#111;left:512.5px;transform:translateX(-50%);clip-path:inset(9.1px -20px 0.0px -20px);-webkit-text-stroke:0.2px #111;">25</div>
<div id="t60" class="t" style="top:530.88px;font-size:15.5px;color:#111;left:512.5px;transform:translateX(-50%);clip-path:inset(-4.9px -20px 0.0px -20px);-webkit-text-stroke:0.2px #111;">26</div>
<div id="t61" class="t" style="top:554.88px;font-size:15.5px;color:#111;left:512.5px;transform:translateX(-50%);clip-path:inset(-4.9px -20px 0.0px -20px);-webkit-text-stroke:0.2px #111;">27</div>
<div id="t62" class="t" style="top:578.88px;font-size:15.5px;color:#111;left:512.5px;transform:translateX(-50%);clip-path:inset(-4.9px -20px 0.0px -20px);-webkit-text-stroke:0.2px #111;">28</div>
<div id="t63" class="t" style="top:588.88px;font-size:15.5px;color:#111;left:512.5px;transform:translateX(-50%);clip-path:inset(9.1px -20px 0.0px -20px);-webkit-text-stroke:0.2px #111;">29</div>
<div id="t64" class="t" style="top:612.88px;font-size:15.5px;color:#111;left:512.5px;transform:translateX(-50%);clip-path:inset(-4.9px -20px 0.0px -20px);-webkit-text-stroke:0.2px #111;">30</div>
<div id="t65" class="t" style="top:635.88px;font-size:15.5px;color:#111;left:512.5px;transform:translateX(-50%);clip-path:inset(-3.9px -20px 0.0px -20px);-webkit-text-stroke:0.2px #111;">31</div>
<div id="t66" class="t" style="top:659.88px;font-size:15.5px;color:#111;left:512.5px;transform:translateX(-50%);clip-path:inset(-4.9px -20px 0.0px -20px);-webkit-text-stroke:0.2px #111;">32</div>
<div id="t67" class="t" style="top:683.88px;font-size:15.5px;color:#111;left:512.5px;transform:translateX(-50%);clip-path:inset(-4.9px -20px 0.0px -20px);-webkit-text-stroke:0.2px #111;">33</div>
<div id="t68" class="t" style="top:707.88px;font-size:15.5px;color:#111;left:512.5px;transform:translateX(-50%);clip-path:inset(-4.9px -20px 0.0px -20px);-webkit-text-stroke:0.2px #111;">34</div>
<div id="t69" class="t" style="top:731.88px;font-size:15.5px;color:#111;left:512.5px;transform:translateX(-50%);clip-path:inset(-4.9px -20px 0.0px -20px);-webkit-text-stroke:0.2px #111;">35</div>
<div id="t70" class="t" style="top:756.88px;font-size:15.5px;color:#111;left:512.5px;transform:translateX(-50%);clip-path:inset(-5.9px -20px 0.0px -20px);-webkit-text-stroke:0.2px #111;">36</div>
<div id="t71" class="t" style="top:780.88px;font-size:15.5px;color:#111;left:512.5px;transform:translateX(-50%);clip-path:inset(-4.9px -20px 0.0px -20px);-webkit-text-stroke:0.2px #111;">37</div>
<div id="t72" class="t" style="top:804.88px;font-size:15.5px;color:#111;left:512.5px;transform:translateX(-50%);clip-path:inset(-4.9px -20px 0.0px -20px);-webkit-text-stroke:0.2px #111;">38</div>
<div id="t73" class="t" style="top:828.88px;font-size:15.5px;color:#111;left:512.5px;transform:translateX(-50%);clip-path:inset(-4.9px -20px 0.0px -20px);-webkit-text-stroke:0.2px #111;">39</div>
<div id="t74" class="t" style="top:852.88px;font-size:15.5px;color:#111;left:512.5px;transform:translateX(-50%);clip-path:inset(-4.9px -20px 0.0px -20px);-webkit-text-stroke:0.2px #111;">40</div>
<div id="t75" class="t" style="top:877.88px;font-size:15.5px;color:#111;left:512.5px;transform:translateX(-50%);clip-path:inset(-5.9px -20px 0.0px -20px);-webkit-text-stroke:0.2px #111;">41</div>
<div id="t76" class="t" style="top:903.88px;font-size:15.5px;color:#111;left:512.5px;transform:translateX(-50%);clip-path:inset(-6.9px -20px 0.0px -20px);-webkit-text-stroke:0.2px #111;">42</div>
<div id="t77" class="t" style="top:928.88px;font-size:15.5px;color:#111;left:512.5px;transform:translateX(-50%);clip-path:inset(-5.9px -20px 0.0px -20px);-webkit-text-stroke:0.2px #111;">43</div>
<div id="t78" class="t" style="top:952.88px;font-size:15.5px;color:#111;left:512.5px;transform:translateX(-50%);clip-path:inset(-4.9px -20px 0.0px -20px);-webkit-text-stroke:0.2px #111;">44</div>
<div id="t79" class="t" style="top:976.88px;font-size:15.5px;color:#111;left:512.5px;transform:translateX(-50%);clip-path:inset(-4.9px -20px 0.0px -20px);-webkit-text-stroke:0.2px #111;">45</div>
<div id="t80" class="t" style="top:1000.88px;font-size:15.5px;color:#111;left:512.5px;transform:translateX(-50%);clip-path:inset(-4.9px -20px 0.0px -20px);-webkit-text-stroke:0.2px #111;">46</div>
<div id="t81" class="t" style="top:1024.88px;font-size:15.5px;color:#111;left:512.5px;transform:translateX(-50%);clip-path:inset(-4.9px -20px 0.0px -20px);-webkit-text-stroke:0.2px #111;">47</div>
<div id="t82" class="t" style="top:1048.88px;font-size:15.5px;color:#111;left:512.5px;transform:translateX(-50%);clip-path:inset(-4.9px -20px 0.0px -20px);-webkit-text-stroke:0.2px #111;">48</div>
<div id="t83" class="t" style="top:1072.88px;font-size:15.5px;color:#111;left:512.5px;transform:translateX(-50%);clip-path:inset(-4.9px -20px 0.0px -20px);-webkit-text-stroke:0.2px #111;">49</div>
<div id="t84" class="t" style="top:1096.88px;font-size:15.5px;color:#111;left:512.5px;transform:translateX(-50%);clip-path:inset(-4.9px -20px 0.0px -20px);-webkit-text-stroke:0.2px #111;">50</div>
<div id="t85" class="t" style="top:1120.88px;font-size:15.5px;color:#111;left:512.5px;transform:translateX(-50%);clip-path:inset(-4.9px -20px 0.0px -20px);-webkit-text-stroke:0.2px #111;">51</div>
<div id="t86" class="t" style="top:1144.88px;font-size:15.5px;color:#111;left:512.5px;transform:translateX(-50%);clip-path:inset(-4.9px -20px 0.0px -20px);-webkit-text-stroke:0.2px #111;">52</div>
<div id="t87" class="t" style="top:1169.88px;font-size:15.5px;color:#111;left:512.5px;transform:translateX(-50%);clip-path:inset(-5.9px -20px 0.0px -20px);-webkit-text-stroke:0.2px #111;">53</div>
<div id="t88" class="t" style="top:1193.88px;font-size:15.5px;color:#111;left:512.5px;transform:translateX(-50%);clip-path:inset(-4.9px -20px 0.0px -20px);-webkit-text-stroke:0.2px #111;">54</div>
<div id="t89" class="t" style="top:1217.88px;font-size:15.5px;color:#111;left:512.5px;transform:translateX(-50%);clip-path:inset(-4.9px -20px 0.0px -20px);-webkit-text-stroke:0.2px #111;">55</div>
<div id="t90" class="t" style="top:82.56px;font-size:20.6px;color:#0e203a;font-weight:bold;left:550.50px;transform:scaleX(0.9018);">FILE COLLECT CONFIGURATION</div>
<div id="t91" class="t" style="top:119.78px;font-size:16.8px;color:#0e203a;font-weight:bold;left:548.50px;transform:scaleX(0.9353);-webkit-text-stroke:0.25px #0e203a;">Package name (Optional)</div>
<div id="t92" class="t" style="top:143.78px;font-size:16.8px;color:#0e203a;font-weight:bold;left:548.50px;transform:scaleX(0.9200);-webkit-text-stroke:0.25px #0e203a;">Active</div>
<div id="t93" class="t" style="top:167.78px;font-size:16.8px;color:#0e203a;font-weight:bold;left:548.50px;transform:scaleX(0.9087);-webkit-text-stroke:0.25px #0e203a;">Source File Type (Excel or PDF)</div>
<div id="t94" class="t" style="top:210.78px;font-size:16.8px;color:#0e203a;font-weight:bold;text-decoration:underline;text-underline-offset:2px;left:548.50px;transform:scaleX(0.9138);-webkit-text-stroke:0.25px #0e203a;">Email Settings</div>
<div id="t95" class="t" style="top:232.63px;font-size:16.5px;color:#0e203a;left:548.50px;transform:scaleX(1.0238);-webkit-text-stroke:0.25px #0e203a;">Email to list</div>
<div id="t96" class="t" style="top:256.63px;font-size:16.5px;color:#0e203a;left:548.50px;transform:scaleX(0.9468);-webkit-text-stroke:0.25px #0e203a;">Email CC list</div>
<div id="t97" class="t" style="top:280.63px;font-size:16.5px;color:#0e203a;left:548.50px;transform:scaleX(1.0127);-webkit-text-stroke:0.25px #0e203a;">Email from</div>
<div id="t98" class="t" style="top:304.63px;font-size:16.5px;color:#0e203a;left:548.50px;transform:scaleX(1.0233);-webkit-text-stroke:0.25px #0e203a;">Subject text</div>
<div id="t99" class="t" style="top:328.53px;font-size:16.5px;color:#0e203a;left:548.50px;transform:scaleX(1.0145);-webkit-text-stroke:0.25px #0e203a;">Body text</div>
<div id="t100" class="t" style="top:373.63px;font-size:16.5px;color:#0e203a;left:548.50px;transform:scaleX(1.0165);-webkit-text-stroke:0.25px #0e203a;">Message priority</div>
<div id="t101" class="t" style="top:397.63px;font-size:16.5px;color:#0e203a;left:548.50px;transform:scaleX(1.0370);-webkit-text-stroke:0.25px #0e203a;">Attach file to email</div>
<div id="t102" class="t" style="top:421.63px;font-size:16.5px;color:#0e203a;left:548.50px;transform:scaleX(1.0240);-webkit-text-stroke:0.25px #0e203a;">Attach each file separately (don't combine them into one)</div>
<div id="t103" class="t" style="top:471.78px;font-size:16.8px;color:#0e203a;font-weight:bold;text-decoration:underline;text-underline-offset:2px;left:548.50px;transform:scaleX(0.9130);-webkit-text-stroke:0.25px #0e203a;">Source Folder Settings</div>
<div id="t104" class="t" style="top:493.63px;font-size:16.5px;color:#0e203a;left:548.50px;transform:scaleX(0.9854);-webkit-text-stroke:0.25px #0e203a;">File source (Axiom or Local)</div>
<div id="t105" class="t" style="top:527.63px;font-size:16.5px;color:#0e203a;left:548.50px;transform:scaleX(1.0074);-webkit-text-stroke:0.25px #0e203a;">Source folder path</div>
<div id="t106" class="t" style="top:551.63px;font-size:16.5px;color:#0e203a;left:548.50px;transform:scaleX(1.0460);-webkit-text-stroke:0.25px #0e203a;">File filter list</div>
<div id="t107" class="t" style="top:575.63px;font-size:16.5px;color:#0e203a;left:548.50px;transform:scaleX(1.0195);-webkit-text-stroke:0.25px #0e203a;">(Multipass only) Filter template (e.g.  {Dept.Dept}_*.xlsx)</div>
<div id="t108" class="t" style="top:609.63px;font-size:16.5px;color:#0e203a;left:548.50px;transform:scaleX(1.0074);-webkit-text-stroke:0.25px #0e203a;">Source folder path</div>
<div id="t109" class="t" style="top:632.63px;font-size:16.5px;color:#0e203a;left:548.50px;transform:scaleX(1.0460);-webkit-text-stroke:0.25px #0e203a;">File filter list</div>
<div id="t110" class="t" style="top:656.63px;font-size:16.5px;color:#0e203a;left:548.50px;transform:scaleX(1.0195);-webkit-text-stroke:0.25px #0e203a;">(Multipass only) Filter template (e.g.  {Dept.Dept}_*.xlsx)</div>
<div id="t111" class="t" style="top:706.78px;font-size:16.8px;color:#0e203a;font-weight:bold;text-decoration:underline;text-underline-offset:2px;left:548.50px;transform:scaleX(0.9371);-webkit-text-stroke:0.25px #0e203a;">Output File Settings</div>
<div id="t112" class="t" style="top:728.63px;font-size:16.5px;color:#0e203a;left:548.50px;transform:scaleX(1.0314);-webkit-text-stroke:0.25px #0e203a;">Output location (local file or Axiom)</div>
<div id="t113" class="t" style="top:753.63px;font-size:16.5px;color:#0e203a;left:548.50px;transform:scaleX(1.0123);-webkit-text-stroke:0.25px #0e203a;">Output file purge setting (Axiom files only) - can be a static purge date or number of days</div>
<div id="t114" class="t" style="top:777.63px;font-size:16.5px;color:#0e203a;left:548.50px;transform:scaleX(1.0455);-webkit-text-stroke:0.25px #0e203a;">Output folder path</div>
<div id="t115" class="t" style="top:801.63px;font-size:16.5px;color:#0e203a;left:548.50px;transform:scaleX(0.9957);-webkit-text-stroke:0.25px #0e203a;">Remote Data Connection Name</div>
<div id="t116" class="t" style="top:825.63px;font-size:16.5px;color:#0e203a;left:548.50px;transform:scaleX(1.0261);-webkit-text-stroke:0.25px #0e203a;">Output file name (no extension)</div>
<div id="t117" class="t" style="top:849.63px;font-size:16.5px;color:#0e203a;left:548.50px;transform:scaleX(1.0450);-webkit-text-stroke:0.25px #0e203a;">Output file type</div>
<div id="t118" class="t" style="top:874.63px;font-size:16.5px;color:#0e203a;left:548.50px;transform:scaleX(0.9953);-webkit-text-stroke:0.25px #0e203a;">Save or email generated files</div>
<div id="t119" class="t" style="top:927.78px;font-size:16.8px;color:#0e203a;font-weight:bold;text-decoration:underline;text-underline-offset:2px;left:548.50px;transform:scaleX(0.9030);-webkit-text-stroke:0.25px #0e203a;">File List Settings</div>
<div id="t120" class="t" style="top:949.63px;font-size:16.5px;color:#0e203a;left:548.50px;transform:scaleX(1.0323);-webkit-text-stroke:0.25px #0e203a;">Auto-generate file list</div>
<div id="t121" class="t" style="top:973.63px;font-size:16.5px;color:#0e203a;left:548.50px;transform:scaleX(1.0075);-webkit-text-stroke:0.25px #0e203a;">Continue On Error</div>
<div id="t122" class="t" style="top:997.63px;font-size:16.5px;color:#0e203a;left:548.50px;transform:scaleX(1.0042);-webkit-text-stroke:0.25px #0e203a;">Include common files in package</div>
<div id="t123" class="t" style="top:236.95px;font-size:16px;color:#e46c0a;left:1016.50px;transform:scaleX(1.0268);-webkit-text-stroke:0.2px #e46c0a;">Common Files are added at the beginning</div>
<div id="t124" class="t" style="top:260.15px;font-size:16px;color:#e46c0a;left:1023.50px;transform:scaleX(1.0323);-webkit-text-stroke:0.2px #e46c0a;">of a package if 'Include common files in</div>
<div id="t125" class="t" style="top:284.45px;font-size:16px;color:#e46c0a;left:1088.50px;transform:scaleX(1.0189);-webkit-text-stroke:0.2px #e46c0a;">package' is set to 'On'.</div>
<div id="t126" class="t" style="top:120.19px;font-size:18.67px;color:#0e203a;left:1017.00px;-webkit-text-stroke:0.3px #0e203a;">Common Files</div>
<div id="t127" class="t" style="top:120.19px;font-size:18.67px;color:#0e203a;left:1345.00px;-webkit-text-stroke:0.3px #0e203a;">Report Book</div>
<div id="t128" class="t" style="top:143.69px;font-size:18.67px;color:#0e203a;left:1345.00px;-webkit-text-stroke:0.3px #0e203a;">On</div>
<div id="t129" class="t" style="top:167.69px;font-size:18.67px;color:#0e203a;left:1345.00px;-webkit-text-stroke:0.3px #0e203a;">PDF</div>
<div id="t130" class="t" style="top:233.99px;font-size:18.67px;color:#0e203a;left:1345.00px;-webkit-text-stroke:0.3px #0e203a;">jdoe@mycompany.com</div>
<div id="t131" class="t" style="top:281.69px;font-size:18.67px;color:#0e203a;left:1345.00px;-webkit-text-stroke:0.3px #0e203a;">noreply@mycompany.com</div>
<div id="t132" class="t" style="top:305.19px;font-size:18.67px;color:#0e203a;left:1345.00px;-webkit-text-stroke:0.3px #0e203a;">Monthly Report Book</div>
<div id="t133" class="t" style="top:331.19px;font-size:18.67px;color:#0e203a;left:1344.50px;transform:scaleX(1.0080);-webkit-text-stroke:0.3px #0e203a;">Attached is your regional monthly report book</div>
<div id="t134" class="t" style="top:351.19px;font-size:18.67px;color:#0e203a;left:1344.50px;-webkit-text-stroke:0.3px #0e203a;">for June.</div>
<div id="t135" class="t" style="top:375.69px;font-size:18.67px;color:#0e203a;left:1345.00px;-webkit-text-stroke:0.3px #0e203a;">Normal</div>
<div id="t136" class="t" style="top:399.39px;font-size:18.67px;color:#0e203a;left:1345.00px;-webkit-text-stroke:0.3px #0e203a;">On</div>
<div id="t137" class="t" style="top:423.69px;font-size:18.67px;color:#0e203a;left:1345.00px;-webkit-text-stroke:0.3px #0e203a;">Off</div>
<div id="t138" class="t" style="top:496.19px;font-size:18.67px;color:#0e203a;left:1017.00px;-webkit-text-stroke:0.3px #0e203a;">Axiom Repository</div>
<div id="t139" class="t" style="top:496.19px;font-size:18.67px;color:#0e203a;left:1345.00px;-webkit-text-stroke:0.3px #0e203a;">Axiom Repository</div>
<div id="t140" class="t" style="top:530.19px;font-size:18.67px;color:#0e203a;left:1017.00px;-webkit-text-stroke:0.3px #0e203a;">\Axiom\Reports Library\File Processing</div>
<div id="t141" class="t" style="top:530.19px;font-size:18.67px;color:#0e203a;left:1345.00px;-webkit-text-stroke:0.3px #0e203a;">\Axiom\Reports Library\File Processing</div>
<div id="t142" class="t" style="top:554.19px;font-size:18.67px;color:#0e203a;left:1017.00px;-webkit-text-stroke:0.3px #0e203a;">*cover*</div>
<div id="t143" class="t" style="top:578.19px;font-size:18.67px;color:#0e203a;left:1345.00px;-webkit-text-stroke:0.3px #0e203a;">*{Dept.Region}*.pdf</div>
<div id="t144" class="t" style="top:731.19px;font-size:18.67px;color:#0e203a;left:1345.00px;-webkit-text-stroke:0.3px #0e203a;">Axiom Repository</div>
<div id="t145" class="t" style="top:780.19px;font-size:18.67px;color:#0e203a;left:1345.00px;-webkit-text-stroke:0.3px #0e203a;">\Axiom\Reports Library\Monthly Reports</div>
<div id="t146" class="t" style="top:828.19px;font-size:18.67px;color:#0e203a;left:1345.00px;-webkit-text-stroke:0.3px #0e203a;">Region_West_MonthlyReportPackage</div>
<div id="t147" class="t" style="top:852.19px;font-size:18.67px;color:#0e203a;left:1345.00px;-webkit-text-stroke:0.3px #0e203a;">.pdf</div>
<div id="t148" class="t" style="top:877.19px;font-size:18.67px;color:#0e203a;left:1345.00px;-webkit-text-stroke:0.3px #0e203a;">Save File and Send Email</div>
<div id="t149" class="t" style="top:952.19px;font-size:18.67px;color:#0e203a;left:1017.00px;-webkit-text-stroke:0.3px #0e203a;">On</div>
<div id="t150" class="t" style="top:976.19px;font-size:18.67px;color:#0e203a;left:1017.00px;-webkit-text-stroke:0.3px #0e203a;">On</div>
<div id="t151" class="t" style="top:952.19px;font-size:18.67px;color:#0e203a;left:1345.00px;-webkit-text-stroke:0.3px #0e203a;">On</div>
<div id="t152" class="t" style="top:976.19px;font-size:18.67px;color:#0e203a;left:1345.00px;-webkit-text-stroke:0.3px #0e203a;">On</div>
<div id="t153" class="t" style="top:1000.19px;font-size:18.67px;color:#0e203a;left:1345.00px;-webkit-text-stroke:0.3px #0e203a;">On</div>
<div id="t154" class="t" style="top:1049.30px;font-size:15px;color:#fff;left:1016.50px;transform:scaleX(1.0357);">File  List</div>
<div id="t155" class="t" style="top:1049.30px;font-size:15px;color:#fff;left:1344.50px;transform:scaleX(1.0357);">File  List</div>
<div id="t156" class="t" style="top:1096.19px;font-size:18.67px;color:#0e203a;left:1017.00px;-webkit-text-stroke:0.3px #0e203a;">\Axiom\Reports Library\File Processing</div>
<div id="t157" class="t" style="top:1096.19px;font-size:18.67px;color:#0e203a;left:1345.00px;-webkit-text-stroke:0.3px #0e203a;">\Axiom\Reports Library\File Processing</div>
<div id="t158" class="t" style="top:1120.19px;font-size:18.67px;color:#0e203a;left:1017.00px;-webkit-text-stroke:0.3px #0e203a;">cover.pdf</div>
<div id="t159" class="t" style="top:1120.19px;font-size:18.67px;color:#0e203a;left:1345.00px;-webkit-text-stroke:0.3px #0e203a;">West_Report1.pdf</div>
<div id="t160" class="t" style="top:1144.19px;font-size:18.67px;color:#0e203a;left:1345.00px;-webkit-text-stroke:0.3px #0e203a;">West_Report2.pdf</div>
<div id="t161" class="t" style="top:1169.19px;font-size:18.67px;color:#0e203a;left:1345.00px;-webkit-text-stroke:0.3px #0e203a;">West_Report3.pdf</div>
<div id="t162" class="t" style="top:423.61px;font-size:17px;color:#111;left:1734.50px;">&lt;-</div>
<div id="t163" class="t" style="top:576.61px;font-size:17px;color:#111;left:1734.50px;">&lt;-</div>
</body></html>
